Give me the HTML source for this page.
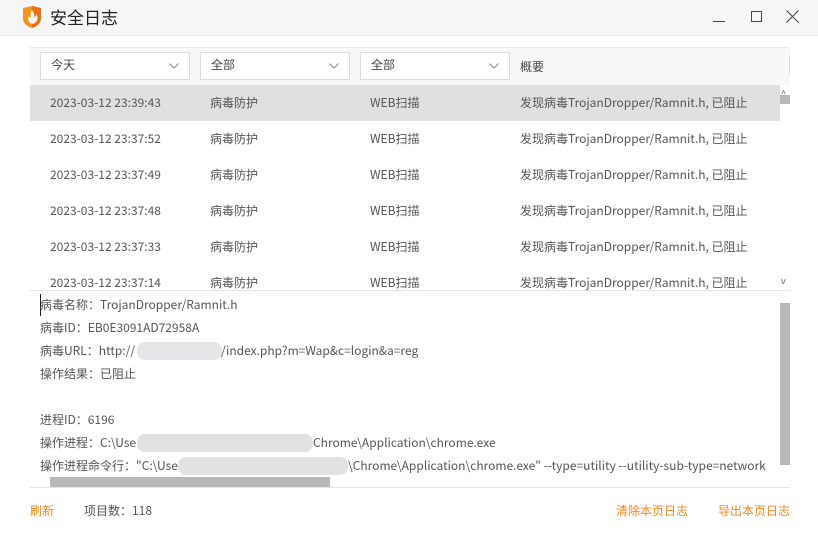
<!DOCTYPE html>
<html><head><meta charset="utf-8"><style>
*{margin:0;padding:0;box-sizing:border-box}
body{width:818px;height:534px;background:#fff;font-family:"Noto Sans CJK SC","Liberation Sans",sans-serif;font-size:12px;line-height:16px;color:#555;position:relative;overflow:hidden}
.abs{position:absolute;white-space:nowrap}
.title{left:0;top:0;width:818px;height:36px;background:#f5f6f7;border-bottom:1px solid #e6e6e6}
.hdr{left:30px;top:47px;width:760px;height:38px;background:#f7f8f9;border-top:1px solid #ececec}
.dd{top:52px;height:28px;width:150px;background:#fff;border:1px solid #dcdcdc;padding:4px 0 0 10px;color:#444}
.dd svg{position:absolute;right:10px;top:10px}
.row{left:30px;width:750px;height:36px}
.row span{position:absolute;top:10px}
.det{left:40px;color:#555}
.blur{background:#e6e6e8;border-radius:8px;height:18px}
</style></head><body>
<div class="abs title"></div>
<svg class="abs" style="left:22px;top:5px" width="20" height="24" viewBox="0 0 20 24"><path d="M1 3 L10 1 L19 3 L19 13 Q19 20 10 23 Q1 20 1 13 Z" fill="#f7941d"/><path d="M10 1 L19 3 L19 13 Q19 20 10 23 Z" fill="#ee6f12"/><path d="M10 5 Q13 9 12 12 Q15 11 14 8 Q17 13 14 17 Q11 20 8 18 Q5 15 7 11 Q8 13 9 12 Q8 8 10 5Z" fill="#fff"/></svg>
<div class="abs" style="left:50px;top:6px;font-size:17px;line-height:22px;color:#222">安全日志</div>
<div class="abs" style="left:713px;top:21px;width:12px;height:1px;background:#444"></div>
<div class="abs" style="left:751px;top:11px;width:11px;height:11px;border:1px solid #444"></div>
<svg class="abs" style="left:786px;top:10px" width="13" height="13"><path d="M0.5 0.5L12.5 12.5M12.5 0.5L0.5 12.5" stroke="#444" stroke-width="1"/></svg>
<div class="abs hdr"></div>
<div class="abs" style="left:789px;top:55px;width:1px;height:20px;background:#ddd"></div>
<div class="abs dd" style="left:40px">今天<svg width="10" height="6"><path d="M0.5 .5L5 5L9.5 .5" stroke="#888" fill="none"/></svg></div>
<div class="abs dd" style="left:200px">全部<svg width="10" height="6"><path d="M0.5 .5L5 5L9.5 .5" stroke="#888" fill="none"/></svg></div>
<div class="abs dd" style="left:360px">全部<svg width="10" height="6"><path d="M0.5 .5L5 5L9.5 .5" stroke="#888" fill="none"/></svg></div>
<div class="abs" style="left:520px;top:59px;color:#444">概要</div>

<div class="abs row" style="top:85px;background:#e0e0e0"><span style="left:20px">2023-03-12 23:39:43</span><span style="left:180px">病毒防护</span><span style="left:340px">WEB扫描</span><span style="left:490px">发现病毒TrojanDropper/Ramnit.h, 已阻止</span></div>
<div class="abs row" style="top:121px"><span style="left:20px">2023-03-12 23:37:52</span><span style="left:180px">病毒防护</span><span style="left:340px">WEB扫描</span><span style="left:490px">发现病毒TrojanDropper/Ramnit.h, 已阻止</span></div>
<div class="abs row" style="top:157px"><span style="left:20px">2023-03-12 23:37:49</span><span style="left:180px">病毒防护</span><span style="left:340px">WEB扫描</span><span style="left:490px">发现病毒TrojanDropper/Ramnit.h, 已阻止</span></div>
<div class="abs row" style="top:193px"><span style="left:20px">2023-03-12 23:37:48</span><span style="left:180px">病毒防护</span><span style="left:340px">WEB扫描</span><span style="left:490px">发现病毒TrojanDropper/Ramnit.h, 已阻止</span></div>
<div class="abs row" style="top:229px"><span style="left:20px">2023-03-12 23:37:33</span><span style="left:180px">病毒防护</span><span style="left:340px">WEB扫描</span><span style="left:490px">发现病毒TrojanDropper/Ramnit.h, 已阻止</span></div>
<div class="abs row" style="top:265px;height:25px;overflow:hidden"><span style="left:20px">2023-03-12 23:37:14</span><span style="left:180px">病毒防护</span><span style="left:340px">WEB扫描</span><span style="left:490px">发现病毒TrojanDropper/Ramnit.h, 已阻止</span></div>
<div class="abs" style="left:781px;top:86px;font-size:9px;color:#666">^</div>
<div class="abs" style="left:780px;top:95px;width:10px;height:9px;background:#b8b8b8"></div>
<div class="abs" style="left:781px;top:273px;font-size:9px;color:#666">v</div>
<div class="abs" style="left:30px;top:290px;width:760px;height:1px;background:#e6e6e6"></div>

<div class="abs" style="left:40px;top:294px;width:1px;height:22px;background:#222"></div>
<div class="abs det" style="top:297px">病毒名称：TrojanDropper/Ramnit.h</div>
<div class="abs det" style="top:320px">病毒ID：EB0E3091AD72958A</div>
<div class="abs det" style="top:343px">病毒URL：http://</div>
<div class="abs blur" style="left:137px;top:342px;width:85px"></div>
<div class="abs det" style="left:221px;top:343px">/index.php?m=Wap&amp;c=login&amp;a=reg</div>
<div class="abs det" style="top:366px">操作结果：已阻止</div>
<div class="abs det" style="top:412px">进程ID：6196</div>
<div class="abs det" style="top:435px">操作进程：C:\Use</div>
<div class="abs blur" style="left:137px;top:434px;width:176px;background:#e2e2e5"></div>
<div class="abs det" style="left:313px;top:435px">Chrome\Application\chrome.exe</div>
<div class="abs det" style="top:458px">操作进程命令行："C:\Use</div>
<div class="abs blur" style="left:178px;top:457px;width:170px;background:#e2e2e5"></div>
<div class="abs det" style="left:348px;top:458px;width:431px;overflow:hidden">\Chrome\Application\chrome.exe" --type=utility --utility-sub-type=network</div>
<div class="abs" style="left:780px;top:303px;width:10px;height:162px;background:#b8b8b8"></div>
<div class="abs" style="left:50px;top:477px;width:280px;height:10px;background:#b8b8b8"></div>
<div class="abs" style="left:30px;top:487px;width:760px;height:1px;background:#e6e6e6"></div>

<div class="abs" style="left:30px;top:503px;color:#f7861b">刷新</div>
<div class="abs" style="left:84px;top:503px">项目数：118</div>
<div class="abs" style="left:616px;top:503px;color:#f7861b">清除本页日志</div>
<div class="abs" style="left:718px;top:503px;color:#f7861b">导出本页日志</div>
</body></html>
